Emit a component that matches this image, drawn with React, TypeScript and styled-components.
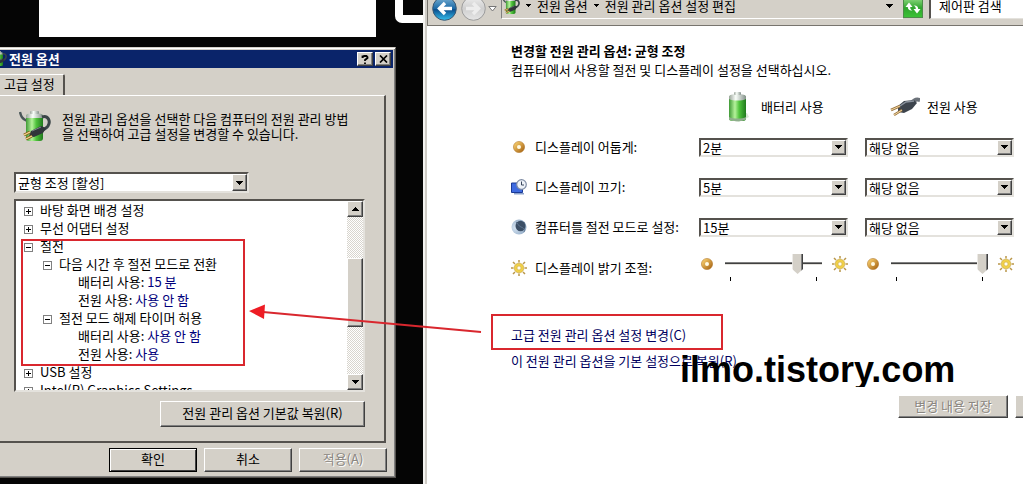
import React, { useState } from "react";
import styled, { createGlobalStyle, css } from "styled-components";

const face = "#d4d0c8";
const dark = "#404040";
const navy = "#0a246a";
const red = "#d9272e";

const GlobalStyle = createGlobalStyle`
  * { box-sizing: border-box; }
  body { margin: 0; background: #050505; }
  body, button, select, input {
    font-family: "Noto Sans CJK KR", "Noto Sans", sans-serif;
    font-size: 13px;
    line-height: 18px;
    color: #000;
  }
`;

const raised = css`
  border: 1px solid;
  border-color: #fff ${dark} ${dark} #fff;
  box-shadow: inset -1px -1px 0 #808080;
  background: ${face};
`;

const sunken = css`
  border: 2px solid;
  border-color: #55524e #e4e2dd #e4e2dd #55524e;
  background: #fff;
`;

const Desktop = styled.main`
  position: relative;
  min-height: 100vh;
  overflow: hidden;
  background: #050505;
`;

const BackPage = styled.div`
  position: absolute;
  left: 39px;
  top: 0;
  width: 337px;
  height: 37px;
  background: #fff;
`;

const BackFrame = styled.div`
  position: absolute;
  left: 395px;
  top: -20px;
  width: 60px;
  height: 43px;
  border: 8px solid #fff;
  border-radius: 7px;
`;

/* ---------- power options dialog ---------- */

const Dialog = styled.section`
  position: absolute;
  left: -4px;
  top: 47px;
  width: 400px;
  padding: 2px 2px 5px;
  border: 1px solid;
  border-color: ${face} #55524e #55524e ${face};
  box-shadow: inset 1px 1px 0 #fff, inset -1px -1px 0 #808080;
  background: ${face};
`;

const TitleBar = styled.header`
  display: flex;
  align-items: center;
  gap: 2px;
  height: 18px;
  padding-right: 2px;
  background: ${navy};
`;

const TitleIcon = styled.span`
  display: flex;
  justify-content: flex-end;
  width: 8px;
  overflow: hidden;
`;

const Title = styled.h1`
  flex: 1;
  margin: 0;
  font-size: 13px;
  line-height: 18px;
  color: #fff;
`;

const CaptionButton = styled.button`
  ${raised}
  display: grid;
  place-items: center;
  width: 16px;
  height: 14px;
  padding: 0;
`;

const TabStrip = styled.div`
  display: flex;
  margin-top: 6px;
`;

const Tab = styled.button`
  width: 66px;
  height: 21px;
  padding: 0 0 2px 5px;
  border: 0;
  border-top: 1px solid #fff;
  border-right: 2px solid #55524e;
  border-radius: 0 2px 0 0;
  background: ${face};
  text-align: left;
`;

const TabPanel = styled.div`
  margin-right: 7px;
  padding: 13px 19px 14px 15px;
  border: solid;
  border-width: 1px 2px 2px 0;
  border-color: #fff #55524e #55524e #fff;
`;

const Intro = styled.div`
  display: flex;
  gap: 11px;
  padding: 2px 0 0 5px;
  margin-bottom: 29px;
`;

const IntroText = styled.p`
  margin: 0;
  line-height: 15px;
  white-space: nowrap;
`;

const PlanRow = styled.div`
  width: 235px;
  margin-bottom: 6px;
`;

const TreeBox = styled.div`
  ${sunken}
  display: flex;
  height: 193px;
  overflow: hidden;
`;

const Tree = styled.ul`
  flex: 1;
  margin: 0;
  padding: 0;
  list-style: none;
  overflow: hidden;
`;

const TreeRow = styled.li<{ $level: number }>`
  display: flex;
  align-items: center;
  gap: 7px;
  height: 18px;
  padding-left: ${(p) => [8, 27, 62][p.$level]}px;
  white-space: nowrap;
`;

const Value = styled.span`
  color: #00007c;
`;

const Toggle = styled.button`
  display: grid;
  place-items: center;
  width: 9px;
  height: 9px;
  margin-top: 2px;
  padding: 0;
  border: 1px solid #808080;
  background: #fff;
`;

const ScrollBar = styled.div`
  display: flex;
  flex-direction: column;
  width: 16px;
  background: repeating-conic-gradient(#fff 0 25%, #d8d5ce 0 50%) 0 0 / 2px 2px;
`;

const ScrollButton = styled.button`
  ${raised}
  display: grid;
  place-items: center;
  height: 16px;
  padding: 0;
`;

const ScrollTrack = styled.div`
  flex: 1;
  padding-top: 41px;
`;

const ScrollThumb = styled.div`
  ${raised}
  height: 69px;
`;

const PushButton = styled.button<{ $w: number; $h: number; $default?: boolean }>`
  ${raised}
  flex: none;
  width: ${(p) => p.$w}px;
  height: ${(p) => p.$h}px;
  padding: 0 0 2px;
  white-space: nowrap;
  ${(p) => p.$default && css`
    border-color: #000;
    box-shadow: inset 1px 1px 0 #fff, inset -1px -1px 0 ${dark};
  `}
  &:disabled {
    color: #8a8680;
    text-shadow: 1px 1px 0 #fff;
  }
`;

const RestoreRow = styled.div`
  display: flex;
  justify-content: flex-end;
  margin-top: 9px;
`;

const DialogButtons = styled.div`
  display: flex;
  justify-content: flex-end;
  gap: 7px;
  margin: 5px 6px 0 0;
`;

/* ---------- drop-down ---------- */

const ComboBox = styled.div<{ $h: number }>`
  ${sunken}
  display: grid;
  grid-template-columns: 1fr 15px;
  grid-template-rows: minmax(0, 1fr);
  height: ${(p) => p.$h}px;
`;

const ComboSelect = styled.select`
  grid-area: 1 / 1 / 2 / 3;
  min-width: 0;
  height: 100%;
  padding: 0 16px 0 2px;
  border: 0;
  outline: 0;
  border-radius: 0;
  appearance: none;
  background: transparent;
  line-height: 15px;
`;

const ComboArrow = styled.span`
  ${raised}
  grid-area: 1 / 2 / 2 / 3;
  display: grid;
  place-items: center;
  pointer-events: none;
`;

/* ---------- explorer window ---------- */

const Explorer = styled.section`
  position: absolute;
  left: 423px;
  right: 0;
  top: -14px;
  bottom: 0;
  border-left: 2px solid #f4f3f1;
  box-shadow: inset 2px 0 0 #cfccc6;
  padding-left: 2px;
  background: #fff;
  overflow: hidden;
`;

const NavBar = styled.nav`
  display: flex;
  align-items: flex-end;
  height: 40px;
  padding: 0 0 4px 4px;
  border-left: 1px solid #77746e;
  border-bottom: 1px solid #77746e;
  background: ${face};
`;

const RoundButton = styled.button`
  display: flex;
  margin-right: 4px;
  padding: 0;
  border: 0;
  background: none;
`;

const HistoryButton = styled.button`
  display: flex;
  margin: 0 4px 9px -2px;
  padding: 0;
  border: 0;
  background: none;
`;

const AddressBar = styled.div`
  flex: 1;
  display: flex;
  align-items: center;
  gap: 6px;
  height: 26px;
  margin-bottom: 2px;
  padding-right: 10px;
  border-left: 1px solid #808080;
  border-bottom: 1px solid #fff;
  white-space: nowrap;
`;

const Crumb = styled.a`
  color: #000;
  text-decoration: none;
`;

const Push = styled.span`
  flex: 1;
`;

const RefreshButton = styled.button`
  display: flex;
  margin: 0 6px 3px 0;
  padding: 0;
  border: 0;
  background: none;
`;

const SearchInput = styled.input`
  width: 94px;
  height: 26px;
  margin-bottom: 2px;
  padding: 0 0 0 8px;
  border: 0;
  border-left: 2px solid #55524e;
  border-bottom: 1px solid #e4e2dd;
  border-radius: 0;
  outline: 0;
  background: #fff;
  &::placeholder { color: #000; opacity: 1; }
`;

const Content = styled.div`
  padding: 15px 9px 0 84px;
`;

const Heading = styled.h2`
  margin: 0;
  font-size: 13px;
  line-height: 19px;
`;

const Lead = styled.p`
  margin: 0 0 8px;
  line-height: 19px;
`;

const Settings = styled.div`
  display: grid;
  grid-template-columns: 171px 1fr 1fr;
  column-gap: 17px;
  grid-template-rows: repeat(4, 40px) 42px;
  align-items: center;
`;

const ColumnHead = styled.div`
  display: flex;
  align-items: center;
  gap: 7px;
  padding-left: 23px;
  white-space: nowrap;
`;

const RowLabel = styled.div`
  display: flex;
  align-items: center;
  gap: 8px;
  white-space: nowrap;
`;

const SliderRow = styled.div`
  display: flex;
  align-items: flex-start;
  height: 28px;
`;

const SliderIcon = styled.span`
  display: flex;
  padding-top: 2px;
`;

const SliderTrack = styled.div`
  flex: 1;
  min-width: 0;
  margin: 0 10px;
`;

const Range = styled.input`
  display: block;
  width: 100%;
  height: 20px;
  margin: 0;
  appearance: none;
  background: linear-gradient(#808080 0 1px, ${dark} 1px 2px, #e4e2dd 2px 3px) 0 8px / 100% 3px no-repeat;
  &::-webkit-slider-thumb {
    appearance: none;
    width: 11px;
    height: 20px;
    background: linear-gradient(90deg, #eceae6 0 1px, ${face} 1px 9px, #808080 9px 10px, ${dark} 10px);
    clip-path: polygon(0 0, 100% 0, 100% 75%, 50% 100%, 0 75%);
  }
`;

const Ticks = styled.div`
  height: 4px;
  margin: 3px 5px 0;
  border: solid #000;
  border-width: 0 1px;
`;

const Links = styled.div`
  display: flex;
  flex-direction: column;
  align-items: flex-start;
  margin-top: 33px;
`;

const TaskLink = styled.a`
  line-height: 26px;
  color: #00005e;
  text-decoration: none;
  white-space: nowrap;
`;

const Footer = styled.div`
  display: flex;
  justify-content: flex-end;
  gap: 7px;
  margin: 21px -89px 0 0;
`;

/* ---------- annotations over the windows ---------- */

const Marker = styled.div<{ $x: number; $y: number; $w: number; $h: number }>`
  position: absolute;
  left: ${(p) => p.$x}px;
  top: ${(p) => p.$y}px;
  width: ${(p) => p.$w}px;
  height: ${(p) => p.$h}px;
  border: 2px solid ${red};
  pointer-events: none;
`;

const ArrowLayer = styled.svg`
  position: absolute;
  left: 245px;
  top: 300px;
  pointer-events: none;
`;

const Watermark = styled.div`
  position: absolute;
  left: 680px;
  top: 350px;
  height: 37px;
  overflow: hidden;
  font: bold 36px/40px "Liberation Sans", Arial, sans-serif;
  color: #000;
  pointer-events: none;
`;

/* ---------- drawings ---------- */

const Caret = ({ up }: { up?: boolean }) => (
  <svg width="7" height="4" viewBox="0 0 7 4" shapeRendering="crispEdges" style={{ flex: "none" }} aria-hidden>
    <path d={up ? "M3 0h1v1h1v1h1v1h1v1H0V3h1V2h1V1h1z" : "M0 0h7v1H6v1H5v1H4v1H3V3H2V2H1V1H0z"} />
  </svg>
);

const CrumbCaret = () => (
  <svg width="5" height="3" viewBox="0 0 5 3" shapeRendering="crispEdges" style={{ flex: "none" }} aria-hidden>
    <path d="M0 0h5v1H4v1H3v1H2V2H1V1H0z" />
  </svg>
);

const Defs = () => (
  <svg width="0" height="0" style={{ position: "absolute" }} aria-hidden>
    <defs>
      <linearGradient id="cell" x1="0" x2="1" y1="0" y2="0">
        <stop offset="0" stopColor="#3f9a35" />
        <stop offset=".35" stopColor="#b5f29b" />
        <stop offset=".6" stopColor="#4fc33c" />
        <stop offset="1" stopColor="#207a1d" />
      </linearGradient>
      <linearGradient id="cap" x1="0" x2="1" y1="0" y2="0">
        <stop offset="0" stopColor="#9aa39a" />
        <stop offset=".4" stopColor="#fafffa" />
        <stop offset="1" stopColor="#84908a" />
      </linearGradient>
      <linearGradient id="gold" x1="0" x2="1" y1="0" y2="1">
        <stop offset="0" stopColor="#f3c868" />
        <stop offset="1" stopColor="#b06f1c" />
      </linearGradient>
      <linearGradient id="blue" x1="0" x2="0" y1="0" y2="1">
        <stop offset="0" stopColor="#7fb4d6" />
        <stop offset=".5" stopColor="#1b69a6" />
        <stop offset=".55" stopColor="#0b4f8e" />
        <stop offset="1" stopColor="#35c0ee" />
      </linearGradient>
      <linearGradient id="silver" x1="0" x2="0" y1="0" y2="1">
        <stop offset="0" stopColor="#eeeeee" />
        <stop offset=".5" stopColor="#cfcfcf" />
        <stop offset="1" stopColor="#e6e6e6" />
      </linearGradient>
      <linearGradient id="green" x1="0" x2="0" y1="0" y2="1">
        <stop offset="0" stopColor="#8bd77e" />
        <stop offset=".5" stopColor="#2fa52c" />
        <stop offset="1" stopColor="#3cc336" />
      </linearGradient>
      <radialGradient id="moon" cx=".25" cy=".55" r=".8">
        <stop offset="0" stopColor="#d4e3f2" />
        <stop offset="1" stopColor="#8aa4c0" />
      </radialGradient>
    </defs>
  </svg>
);

const BatteryPlug = ({ size }: { size: number }) => (
  <svg width={size} height={size} viewBox="0 0 32 32" style={{ flex: "none" }} aria-hidden>
    <path d="M1 1c1 4 2 7 7 9" fill="none" stroke="#4a5658" strokeWidth="2.4" />
    <rect x="7" y="3" width="17" height="27" rx="3" fill="url(#cell)" />
    <path d="M7 5c0-2 3-3 8.500-3S24 3 24 5v2H7z" fill="url(#cap)" />
    <rect x="11" y="0" width="9" height="3" rx="1" fill="url(#cap)" />
    <path d="M23 6c6-2 9 4 6 9-2 3-5 4-9 6" fill="none" stroke="#3b4548" strokeWidth="3" />
    <path d="M12 20l10-5 5 2-3 5-9 4-5-1z" fill="#30363a" />
    <path d="M13 20l9-4" stroke="#7d878b" />
    <path d="M11 21l-6 3M13 25l-6 3" stroke="#8a5f1c" strokeWidth="3" />
    <path d="M11 21l-6 3M13 25l-6 3" stroke="#f5dc92" strokeWidth="1.2" />
  </svg>
);

const Battery = () => (
  <svg width="32" height="32" viewBox="0 0 32 32" aria-hidden>
    <path d="M7 25l18-3 2 4-10 5-10-2z" fill="#d9e6d6" />
    <rect x="7" y="4" width="17" height="26" rx="3" fill="url(#cell)" />
    <path d="M7 6c0-2 3-3 8.500-3S24 4 24 6v2c-4 2-13 2-17 0z" fill="url(#cap)" />
    <rect x="12" y="1" width="7" height="3" rx="1" fill="url(#cap)" />
    <path d="M7 26c4 2 13 2 17 0v2c-2 3-15 3-17 0z" fill="#8fae8c" />
  </svg>
);

const Plug = () => (
  <svg width="32" height="20" viewBox="0 0 32 20" aria-hidden>
    <path d="M24 5c3-2 4-3 8-2" fill="none" stroke="#6c727a" strokeWidth="4" />
    <path d="M10 9l6-5 10-1 3 3-5 6-8 4-6-1z" fill="#3d444d" />
    <path d="M12 9l6-4 8-1" fill="none" stroke="#8b939e" strokeWidth="1.500" />
    <path d="M12 9L3 13M14 13l-8 5" stroke="#9a7440" strokeWidth="2.600" />
    <path d="M12 9L3 13M14 13l-8 5" stroke="#f2d7a0" strokeWidth="1" />
  </svg>
);

const Ring = () => (
  <svg width="16" height="16" viewBox="0 0 16 16" aria-hidden>
    <circle cx="8" cy="8" r="3.800" fill="#fffbe6" stroke="url(#gold)" strokeWidth="3.600" />
    <circle cx="8" cy="8" r="5.600" fill="none" stroke="#a86c1c" strokeWidth=".5" />
  </svg>
);

const Sun = () => (
  <svg width="16" height="16" viewBox="0 0 16 16" style={{ flex: "none" }} aria-hidden>
    <path d="M8 0v2.500M8 13.500V16M0 8h2.500M13.500 8H16M2 2l2 2M12 12l2 2M14 2l-2 2M4 12l-2 2" stroke="#b9974a" strokeWidth="1.500" />
    <circle cx="8" cy="8" r="3.400" fill="#fffdf0" stroke="#f0d048" strokeWidth="2.800" />
    <circle cx="8" cy="8" r="4.900" fill="none" stroke="#b8922c" strokeWidth=".5" />
    <circle cx="8" cy="8" r="2" fill="none" stroke="#c9a23a" strokeWidth=".5" />
  </svg>
);

const ScreenClock = () => (
  <svg width="16" height="16" viewBox="0 0 16 16" aria-hidden>
    <path d="M.5 4h11v9.500H.5z" fill="#3f6be0" stroke="#1b3a96" strokeWidth="1" />
    <path d="M3 14h10v1.500H3z" fill="#8da2cc" />
    <circle cx="10.500" cy="5.500" r="4.800" fill="#eef2f8" stroke="#7e8ba3" strokeWidth="1.200" />
    <path d="M10.500 2.500v3.500h2.500" fill="none" stroke="#39465c" />
  </svg>
);

const Moon = () => (
  <svg width="16" height="16" viewBox="0 0 16 16" aria-hidden>
    <circle cx="8" cy="8" r="7.500" fill="url(#moon)" />
    <ellipse cx="9.500" cy="7" rx="5" ry="5.300" fill="#3c4f66" />
    <path d="M5 3c2 1 2 4 5 5s4 3 3 5" fill="none" stroke="#5d748f" strokeWidth="1" />
  </svg>
);

const BackArrow = ({ on }: { on?: boolean }) => (
  <svg width="25" height="25" viewBox="0 0 25 25" aria-hidden>
    <circle cx="12.500" cy="12.500" r="11.800" fill={on ? "url(#blue)" : "url(#silver)"} stroke={on ? "#3c5872" : "#9c9c9c"} />
    <path
      d={on ? "M20 12.500H8M13 7l-5.500 5.500L13 18" : "M5 12.500h12M12 7l5.500 5.500L12 18"}
      fill="none"
      stroke={on ? "#fff" : "#ededed"}
      strokeWidth="3.400"
    />
  </svg>
);

const Refresh = () => (
  <svg width="20" height="20" viewBox="0 0 20 20" aria-hidden>
    <rect x=".5" y=".5" width="19" height="19" fill="url(#green)" stroke="#4d8c49" />
    <path d="M2.500 9L6 4.500 9.500 9H7.200c0 2 .8 3 2.300 3.500-3 .5-4.700-1-4.700-3.500z" fill="#fff" />
    <path d="M17.500 11L14 15.500 10.500 11h2.300c0-2-.8-3-2.300-3.500 3-.5 4.700 1 4.700 3.500z" fill="#fff" />
  </svg>
);

/* ---------- parts ---------- */

function Combo({ label, options, height }: { label: string; options: string[]; height: number }) {
  return (
    <ComboBox $h={height}>
      <ComboSelect aria-label={label}>
        {options.map((o) => <option key={o}>{o}</option>)}
      </ComboSelect>
      <ComboArrow><Caret /></ComboArrow>
    </ComboBox>
  );
}

function Brightness({ label, initial }: { label: string; initial: number }) {
  const [value, setValue] = useState(initial);
  return (
    <SliderRow>
      <SliderIcon><Ring /></SliderIcon>
      <SliderTrack>
        <Range type="range" min={0} max={100} value={value} aria-label={label}
          onChange={(e) => setValue(Number(e.target.value))} />
        <Ticks />
      </SliderTrack>
      <SliderIcon><Sun /></SliderIcon>
    </SliderRow>
  );
}

type Node = { level: number; text: string; value?: string; open?: boolean };

const nodes: Node[] = [
  { level: 0, text: "바탕 화면 배경 설정", open: false },
  { level: 0, text: "무선 어댑터 설정", open: false },
  { level: 0, text: "절전", open: true },
  { level: 1, text: "다음 시간 후 절전 모드로 전환", open: true },
  { level: 2, text: "배터리 사용:", value: "15 분" },
  { level: 2, text: "전원 사용:", value: "사용 안 함" },
  { level: 1, text: "절전 모드 해제 타이머 허용", open: true },
  { level: 2, text: "배터리 사용:", value: "사용 안 함" },
  { level: 2, text: "전원 사용:", value: "사용" },
  { level: 0, text: "USB 설정", open: false },
  { level: 0, text: "Intel(R) Graphics Settings", open: false },
];

const timeouts = [
  { icon: <Ring />, label: "디스플레이 어둡게:", battery: "2분" },
  { icon: <ScreenClock />, label: "디스플레이 끄기:", battery: "5분" },
  { icon: <Moon />, label: "컴퓨터를 절전 모드로 설정:", battery: "15분" },
];

function PowerDialog() {
  return (
    <Dialog aria-label="전원 옵션">
      <TitleBar>
        <TitleIcon><BatteryPlug size={16} /></TitleIcon>
        <Title>전원 옵션</Title>
        <CaptionButton aria-label="도움말">
          <svg width="8" height="9" viewBox="0 0 8 9" aria-hidden>
            <path d="M1.500 3V1.500h1L3 1h2.500L6.500 2v1L4 5v1M4 7.500V9" fill="none" stroke="#000" strokeWidth="1.800" />
          </svg>
        </CaptionButton>
        <CaptionButton aria-label="닫기">
          <svg width="9" height="8" viewBox="0 0 9 8" aria-hidden>
            <path d="M1 0.500l7 7M8 0.500l-7 7" stroke="#000" strokeWidth="1.700" />
          </svg>
        </CaptionButton>
      </TitleBar>
      <TabStrip><Tab>고급 설정</Tab></TabStrip>
      <TabPanel>
        <Intro>
          <BatteryPlug size={32} />
          <IntroText>
            전원 관리 옵션을 선택한 다음 컴퓨터의 전원 관리 방법<br />
            을 선택하여 고급 설정을 변경할 수 있습니다.
          </IntroText>
        </Intro>
        <PlanRow><Combo label="전원 관리 옵션" options={["균형 조정 [활성]"]} height={21} /></PlanRow>
        <TreeBox>
          <Tree>
            {nodes.map((n, i) => (
              <TreeRow key={i} $level={n.level}>
                {n.open !== undefined && (
                  <Toggle aria-label={n.text} aria-expanded={n.open}>
                    <svg width="5" height="5" shapeRendering="crispEdges" aria-hidden>
                      <path d={n.open ? "M0 2h5v1H0z" : "M0 2h2V0h1v2h2v1H3v2H2V3H0z"} />
                    </svg>
                  </Toggle>
                )}
                <span>{n.text}{n.value && <Value> {n.value}</Value>}</span>
              </TreeRow>
            ))}
          </Tree>
          <ScrollBar>
            <ScrollButton aria-label="위로"><Caret up /></ScrollButton>
            <ScrollTrack><ScrollThumb /></ScrollTrack>
            <ScrollButton aria-label="아래로"><Caret /></ScrollButton>
          </ScrollBar>
        </TreeBox>
        <RestoreRow>
          <PushButton $w={205} $h={26}>전원 관리 옵션 기본값 복원(R)</PushButton>
        </RestoreRow>
      </TabPanel>
      <DialogButtons>
        <PushButton $w={88} $h={24} $default>확인</PushButton>
        <PushButton $w={88} $h={24}>취소</PushButton>
        <PushButton $w={88} $h={24} disabled>적용(A)</PushButton>
      </DialogButtons>
    </Dialog>
  );
}

function ExplorerWindow() {
  return (
    <Explorer aria-label="전원 관리 옵션 설정 편집">
      <NavBar>
        <RoundButton aria-label="뒤로"><BackArrow on /></RoundButton>
        <RoundButton aria-label="앞으로"><BackArrow /></RoundButton>
        <HistoryButton aria-label="최근 페이지">
          <svg width="9" height="6" viewBox="0 0 9 6" aria-hidden>
            <path d="M.8.500h7.400L4.500 5z" fill="#fff" stroke="#777" />
          </svg>
        </HistoryButton>
        <AddressBar>
          <BatteryPlug size={18} />
          <CrumbCaret />
          <Crumb href="#options">전원 옵션</Crumb>
          <CrumbCaret />
          <Crumb href="#edit">전원 관리 옵션 설정 편집</Crumb>
          <Push />
          <Caret />
        </AddressBar>
        <RefreshButton aria-label="새로 고침"><Refresh /></RefreshButton>
        <SearchInput type="text" placeholder="제어판 검색" aria-label="제어판 검색" />
      </NavBar>
      <Content>
        <Heading>변경할 전원 관리 옵션: 균형 조정</Heading>
        <Lead>컴퓨터에서 사용할 절전 및 디스플레이 설정을 선택하십시오.</Lead>
        <Settings>
          <span />
          <ColumnHead><Battery />배터리 사용</ColumnHead>
          <ColumnHead><Plug />전원 사용</ColumnHead>
          {timeouts.map((t) => (
            <React.Fragment key={t.label}>
              <RowLabel>{t.icon}{t.label}</RowLabel>
              <Combo label={`${t.label} 배터리 사용`} options={[t.battery]} height={19} />
              <Combo label={`${t.label} 전원 사용`} options={["해당 없음"]} height={19} />
            </React.Fragment>
          ))}
          <RowLabel><Sun />디스플레이 밝기 조절:</RowLabel>
          <Brightness label="디스플레이 밝기 조절: 배터리 사용" initial={78} />
          <Brightness label="디스플레이 밝기 조절: 전원 사용" initial={100} />
        </Settings>
        <Links>
          <TaskLink href="#advanced">고급 전원 관리 옵션 설정 변경(C)</TaskLink>
          <TaskLink href="#restore">이 전원 관리 옵션을 기본 설정으로 복원(R)</TaskLink>
        </Links>
        <Footer>
          <PushButton $w={110} $h={23} disabled>변경 내용 저장</PushButton>
          <PushButton $w={88} $h={23} aria-label="취소" />
        </Footer>
      </Content>
    </Explorer>
  );
}

export default function App() {
  return (
    <Desktop>
      <GlobalStyle />
      <Defs />
      <BackPage />
      <BackFrame />
      <PowerDialog />
      <ExplorerWindow />
      <Marker $x={21} $y={239} $w={224} $h={127} />
      <Marker $x={491} $y={314} $w={232} $h={36} />
      <ArrowLayer width="240" height="36" aria-hidden>
        <path d="M18 12L236 32" stroke={red} strokeWidth="1.800" />
        <path d="M4 11L20 4.500 19 19z" fill="#ee1c24" />
      </ArrowLayer>
      <Watermark>ilmo.tistory.com</Watermark>
    </Desktop>
  );
}
